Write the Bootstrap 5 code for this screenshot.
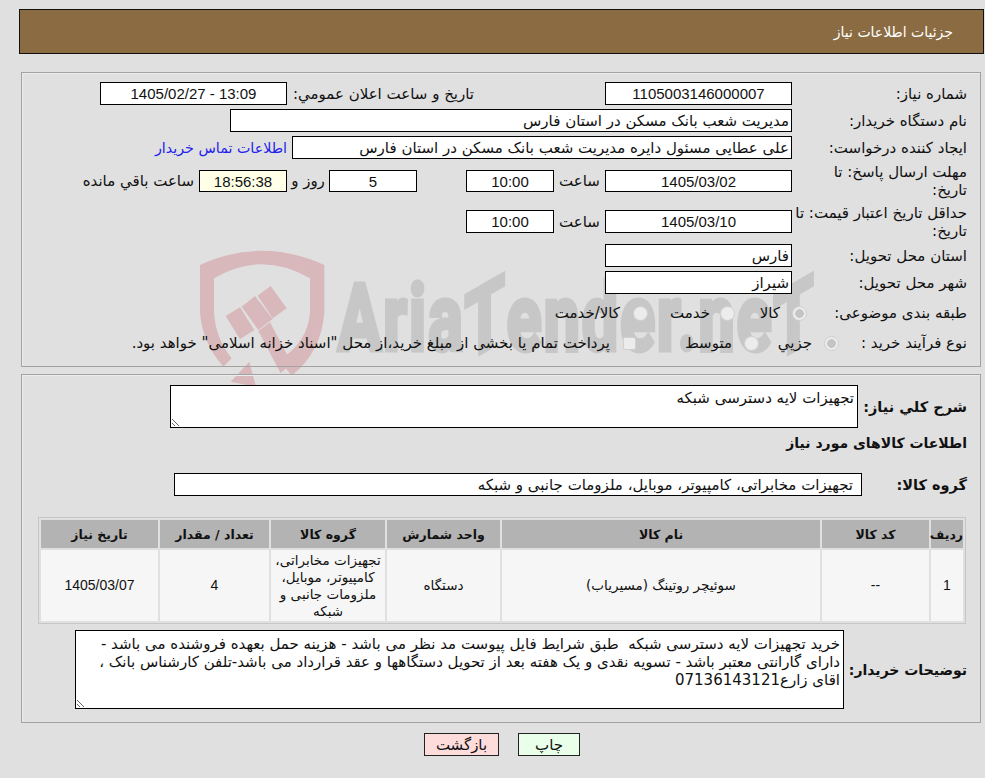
<!DOCTYPE html>
<html lang="fa" dir="rtl">
<head>
<meta charset="utf-8">
<title>جزئیات اطلاعات نیاز</title>
<link href="https://cdn.jsdelivr.net/npm/bootstrap@5.3.0/dist/css/bootstrap.min.css" rel="stylesheet">
<style>
html,body{height:100%;}
body{background:#e0e0e0;color:#111;font-family:"DejaVu Sans",sans-serif;font-size:15px;line-height:18px;overflow:hidden;position:relative;}
.num{font-family:"Liberation Sans",sans-serif;font-size:15px;}
.page-wrap{position:relative;z-index:1;}
.page-head{margin:9px 1px 0 19px;height:45px;background:#8b6c42;border:1px solid #111;color:#fff;font-size:14px;padding:0 30px;display:flex;align-items:center;}
.sect{margin-right:4px;width:960px;border:1px solid #a2a2a2;box-shadow:inset 1px 1px 0 #ececec;padding-right:13px;}
.sect-a{margin-top:18px;height:295px;padding-top:9px;}
.sect-b{margin-top:7px;height:349px;padding-top:10px;}
.frow{display:flex;align-items:center;height:23px;margin-bottom:4px;}
.h36{height:36px;}
.h36b{height:37px;}
.h30{height:30px;margin-bottom:0;}
.lbl{width:175px;flex:none;line-height:18px;white-space:nowrap;}
.lbl-radio{width:160px;}
.lbl-kind{width:128px;}
.fx{border:1px solid #000;border-radius:0;background:#fff;color:#111;height:23px;padding:0 2px;font-family:"DejaVu Sans",sans-serif;font-size:15px;flex:none;min-height:0;box-shadow:none;outline:none;}
.fx.num{font-family:"Liberation Sans",sans-serif;font-size:15px;text-align:center;}
.h22{height:22px;}
.w187{width:187px;}.w562{width:562px;}.w500{width:500px;}.w88{width:88px;}
.warm{background:#ffffe8;}
.spacer-131{width:131px;flex:none;}
.spacer-49{width:49px;flex:none;}
.lbl-pub{width:187px;flex:none;}
.unit-hour{width:51px;flex:none;text-align:center;}
.unit-day{width:42px;flex:none;text-align:center;}
.left-txt{padding-right:5px;}
.buyer{color:#2222ee;text-decoration:none;margin-right:5px;font-size:14.25px;}
.rad{appearance:none;width:15px;height:15px;border-radius:50%;background:#ececec;border:1px solid #d0d0d0;flex:none;margin:0;display:inline-block;}
.rad.on{background:radial-gradient(circle,#c4c4c4 0 4px,#ececec 4.6px);}
.chk{appearance:none;width:13px;height:13px;border-radius:2px;background:#ececec;border:1px solid #d0d0d0;flex:none;margin:0;}
.o1{width:57px;padding-right:12px;flex:none;}
.o2{width:72px;padding-right:10px;flex:none;}
.o3{padding-right:13px;}
.p1{width:65px;padding-right:12px;flex:none;}
.p2{width:108px;padding-right:12px;flex:none;}
.p3{padding-right:13px;white-space:nowrap;}
.blbl{font-weight:700;font-size:14.5px;}
.lb2{width:109px;flex:none;}
.lb3{width:105px;flex:none;}
.lb4{width:123px;flex:none;font-size:14px;}
.ta{resize:both;display:block;line-height:18px;padding:3px 3px;}
.ta1{width:688px;height:43px;}
.ta2{width:769px;height:79px;padding-top:4px;}
.gi{width:688px;padding-right:8px;}
.head2{height:30px;display:flex;align-items:center;font-size:14px;}
.row-group{margin:15px 0 0;}
.items{border-collapse:separate;border-spacing:2px;border:1px solid #c6c6c6;table-layout:fixed;width:928px;margin:21px 1px 0 0;font-size:13.5px;line-height:17px;}
.items th{background:#b3b3b3;height:28px;text-align:center;font-size:12.5px;font-weight:700;padding:0;}
.items td{background:#f6f6f6;height:71px;text-align:center;padding:0 3px;vertical-align:middle;}
.items .num{font-size:14px;}
.c1{width:32px;}.c2{width:107px;}.c3{width:318px;}.c4{width:113px;}.c5{width:114px;}.c6{width:109px;}.c7{width:117px;}
.row-notes{margin-top:6px;}
.btns{margin-top:10px;height:23px;display:flex;justify-content:center;gap:19px;padding-left:19px;}
.act{height:23px;border:1px solid #222;border-radius:0;padding:0;font-size:15px;line-height:20px;color:#111;}
.act-print{width:62px;background:#eaffea;}
.act-back{width:75px;background:#ffdcdc;}
.act:hover{color:#111;}
.mark-shield{position:absolute;left:190px;top:245px;width:150px;height:150px;z-index:0;}
.mark-text{position:absolute;left:338px;top:259px;z-index:0;direction:ltr;white-space:nowrap;font-family:Roboto,"Liberation Sans",sans-serif;font-weight:700;font-size:92px;line-height:120px;color:#c7c7c7;-webkit-text-stroke:5px #c7c7c7;transform:scaleX(.7);transform-origin:0 0;letter-spacing:3px;}
.mark-t{display:inline-block;transform:skewY(-22deg);}
</style>
</head>
<body>
<svg class="mark-shield" viewBox="0 0 450 450" aria-hidden="true">
  <g fill="#d8b8ba">
    <path d="M30 60Q215-25 403 60L403 200Q395 320 305 392L268 345Q355 290 360 200L360 100Q215 15 72 100L72 200Q76 280 125 340L100 365Q35 290 30 200Z"/>
    <path d="M107 213L150 187L193 255L150 283Z"/>
    <path d="M155 185L195 153L248 222L205 255Z"/>
    <path d="M203 152L242 123L290 190L248 220Z"/>
    <path d="M205 258L240 232L305 355L272 385Z"/>
    <path d="M178 350L198 425L122 410Z"/>
  </g>
</svg>
<div class="mark-text" aria-hidden="true">Aria<span class="mark-t">T</span>ender.ne<span class="mark-t">T</span></div>

<div class="page-wrap">
  <div class="page-head">جزئیات اطلاعات نیاز</div>

  <div class="sect sect-a">
    <div class="frow">
      <div class="lbl">شماره نیاز:</div>
      <input class="fx num w187" readonly value="1105003146000007">
      <div class="spacer-131"></div>
      <div class="lbl-pub">تاریخ و ساعت اعلان عمومي:</div>
      <input class="fx num w187" readonly value="1405/02/27 - 13:09" dir="ltr">
    </div>
    <div class="frow">
      <div class="lbl">نام دستگاه خریدار:</div>
      <input class="fx w562" readonly value="مدیریت شعب بانک مسکن در استان فارس">
    </div>
    <div class="frow">
      <div class="lbl">ایجاد کننده درخواست:</div>
      <input class="fx w500" readonly value="علی عطایی مسئول دایره مدیریت شعب بانک مسکن در استان فارس">
      <a class="buyer" href="#">اطلاعات تماس خریدار</a>
    </div>
    <div class="frow h36">
      <div class="lbl">مهلت ارسال پاسخ: تا<br>تاریخ:</div>
      <input class="fx num w187 h22" readonly value="1405/03/02">
      <div class="unit-hour">ساعت</div>
      <input class="fx num w88 h22" readonly value="10:00">
      <div class="spacer-49"></div>
      <input class="fx num w88 h22" readonly value="5">
      <div class="unit-day">روز و</div>
      <input class="fx num w88 h22 warm" readonly value="18:56:38">
      <div class="left-txt">ساعت باقي مانده</div>
    </div>
    <div class="frow h36b">
      <div class="lbl">حداقل تاریخ اعتبار قیمت: تا<br>تاریخ:</div>
      <input class="fx num w187" readonly value="1405/03/10">
      <div class="unit-hour">ساعت</div>
      <input class="fx num w88" readonly value="10:00">
    </div>
    <div class="frow">
      <div class="lbl">استان محل تحویل:</div>
      <input class="fx w187" readonly value="فارس">
    </div>
    <div class="frow">
      <div class="lbl">شهر محل تحویل:</div>
      <input class="fx w187" readonly value="شیراز">
    </div>
    <div class="frow h30">
      <div class="lbl lbl-radio">طبقه بندی موضوعی:</div>
      <input class="rad on" type="radio" name="cat" disabled checked>
      <span class="o1">کالا</span>
      <input class="rad" type="radio" name="cat" disabled>
      <span class="o2">خدمت</span>
      <input class="rad" type="radio" name="cat" disabled>
      <span class="o3">کالا/خدمت</span>
    </div>
    <div class="frow h30">
      <div class="lbl lbl-kind">نوع فرآیند خرید :</div>
      <input class="rad on" type="radio" name="kind" disabled checked>
      <span class="p1">جزیي</span>
      <input class="rad" type="radio" name="kind" disabled>
      <span class="p2">متوسط</span>
      <input class="chk" type="checkbox" disabled>
      <span class="p3">پرداخت تمام یا بخشی از مبلغ خرید،از محل "اسناد خزانه اسلامی" خواهد بود.</span>
    </div>
  </div>

  <div class="sect sect-b">
    <div class="d-flex">
      <div class="lb2 blbl d-flex align-items-center">شرح كلي نياز:</div>
      <textarea class="fx ta ta1" readonly>تجهیزات لایه دسترسی شبکه</textarea>
    </div>
    <div class="head2 blbl">اطلاعات کالاهای مورد نیاز</div>
    <div class="frow row-group">
      <div class="blbl lb3">گروه کالا:</div>
      <input class="fx gi" readonly value="تجهیزات مخابراتی، کامپیوتر، موبایل، ملزومات جانبی و شبکه">
    </div>
    <table class="items">
      <colgroup><col class="c1"><col class="c2"><col class="c3"><col class="c4"><col class="c5"><col class="c6"><col class="c7"></colgroup>
      <thead><tr><th>ردیف</th><th>کد کالا</th><th>نام کالا</th><th>واحد شمارش</th><th>گروه کالا</th><th>تعداد / مقدار</th><th>تاریخ نیاز</th></tr></thead>
      <tbody><tr>
        <td><span class="num">1</span></td>
        <td><span class="num">--</span></td>
        <td>سوئیچر روتینگ (مسیریاب)</td>
        <td>دستگاه</td>
        <td>تجهیزات مخابراتی، کامپیوتر، موبایل، ملزومات جانبی و شبکه</td>
        <td><span class="num">4</span></td>
        <td><span class="num">1405/03/07</span></td>
      </tr></tbody>
    </table>
    <div class="d-flex row-notes">
      <div class="blbl lb4 d-flex align-items-center">توضیحات خریدار:</div>
      <textarea class="fx ta ta2" readonly>خرید تجهیزات لایه دسترسی شبکه  طبق شرایط فایل پیوست مد نظر می باشد - هزینه حمل بعهده فروشنده می باشد - دارای گارانتی معتبر باشد - تسویه نقدی و یک هفته بعد از تحویل دستگاهها و عقد قرارداد می باشد-تلفن کارشناس بانک ، اقای زارع07136143121</textarea>
    </div>
  </div>

  <div class="btns">
    <button class="btn act act-print" type="button">چاپ</button>
    <button class="btn act act-back" type="button">بازگشت</button>
  </div>
</div>
</body>
</html>
